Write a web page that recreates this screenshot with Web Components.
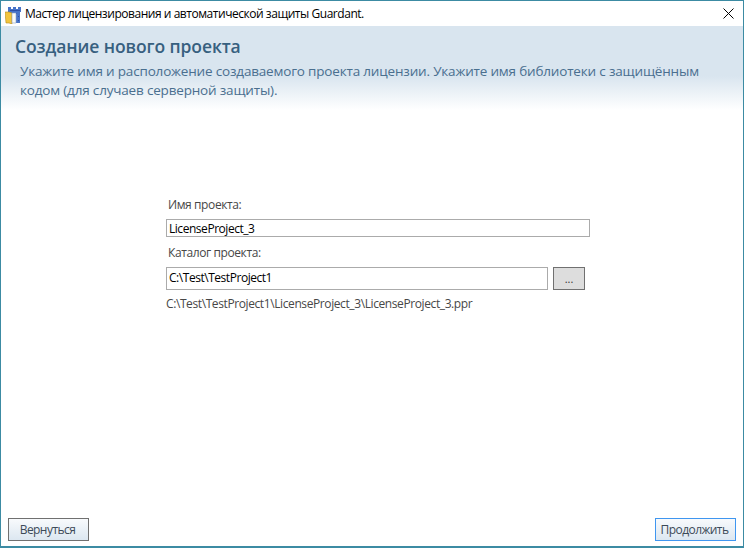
<!DOCTYPE html>
<html lang="ru">
<head>
<meta charset="utf-8">
<title>Guardant</title>
<style>
html, body { margin: 0; padding: 0; height: 100%; background: #fff; }
body { font-family: "Open Sans", "Noto Sans", sans-serif; font-size: 12px; }
</style>
</head>
<body>
<wizard-window>
    <title-bar slot="title" text="Мастер лицензирования и автоматической защиты Guardant."></title-bar>
    <wizard-header slot="header" heading="Создание нового проекта">Укажите имя и расположение создаваемого проекта лицензии. Укажите имя библиотеки с защищённым кодом (для случаев серверной защиты).</wizard-header>
    <project-form slot="body"></project-form>
    <wizard-button slot="back">Вернуться</wizard-button>
    <wizard-button slot="next" focused>Продолжить</wizard-button>
</wizard-window>

<script>
const FONT = '"Open Sans", "Noto Sans", sans-serif';

class WizardWindow extends HTMLElement {
    connectedCallback() {
        this.attachShadow({mode: 'open'}).innerHTML = `
            <style>
                :host { display: flex; flex-direction: column; box-sizing: border-box; width: 744px; height: 548px; border: 1px solid #3c8ba3; border-bottom-width: 2px; background: #fff; overflow: hidden; }
                .body { flex: 1; }
                .footer { display: flex; justify-content: space-between; padding: 0 7px 5px 7px; }
            </style>
            <slot name="title"></slot>
            <slot name="header"></slot>
            <div class="body"><slot name="body"></slot></div>
            <div class="footer"><slot name="back"></slot><slot name="next"></slot></div>
        `;
    }
}

class TitleBar extends HTMLElement {
    connectedCallback() {
        this.attachShadow({mode: 'open'}).innerHTML = `
            <style>
                :host { display: flex; align-items: center; height: 25px; background: #fff; flex: none; }
                svg.icon { margin: 3px 3px 0 4px; flex: none; }
                .text { flex: 1; font: 12px/16px ${FONT}; letter-spacing: -0.46px; color: #000; white-space: nowrap; }
                svg.close { margin-right: 9px; flex: none; }
            </style>
            <svg class="icon" width="17" height="18" viewBox="0 0 17 18">
                <path d="M3 1h3v2h2V1h3v2h2V1h3v5h-1v11H4V6H3z" fill="#4673c8"/>
                <path d="M5 4h10v1H5zM6 8h1v1H6zM10 7h2v1h-2zM13 10h1v1h-1zM13 14h1v1h-1z" fill="#2a4ea6"/>
                <path d="M0 6h4l3 1v11l-3-1H1z" fill="#f2c53d" stroke="#b48a1e" stroke-width=".6"/>
                <path d="M7 7h4v10H7z" fill="#fbfbf6" stroke="#8ea6cc" stroke-width=".6"/>
            </svg>
            <div class="text">${this.getAttribute('text')}</div>
            <svg class="close" width="11" height="11" viewBox="0 0 11 11"><path d="M.5.5l10 10M10.5.5l-10 10" stroke="#000" stroke-width="1" fill="none"/></svg>
        `;
    }
}

class WizardHeader extends HTMLElement {
    connectedCallback() {
        this.attachShadow({mode: 'open'}).innerHTML = `
            <style>
                :host { display: block; height: 84px; box-sizing: border-box; padding: 9px 14px 0 14px; flex: none;
                    background: linear-gradient(to bottom, #d9e5ef 0, #d9e5ef 50px, #ffffff 84px); }
                h1 { margin: 0; font: 600 17.5px/22px ${FONT}; color: #37607f; letter-spacing: -0.1px; }
                p { margin: 5px 0 0 5px; width: 685px; font: 13.5px/19px ${FONT}; letter-spacing: -0.18px; color: #4a6f8f; }
            </style>
            <h1>${this.getAttribute('heading')}</h1>
            <p><slot></slot></p>
        `;
    }
}

class TextField extends HTMLElement {
    connectedCallback() {
        this.attachShadow({mode: 'open'}).innerHTML = `
            <style>
                :host { display: flex; align-items: center; box-sizing: border-box; height: var(--field-height, 18px); border: 1px solid #ababab; padding: var(--field-pad, 1px 2px 0 2px); font: 12px/16px ${FONT}; letter-spacing: -0.46px; color: #000; background: #fff; white-space: nowrap; }
            </style>
            <slot></slot>
        `;
    }
}

class ProjectForm extends HTMLElement {
    connectedCallback() {
        this.attachShadow({mode: 'open'}).innerHTML = `
            <style>
                :host { display: block; box-sizing: border-box; width: 424px; margin: 0 0 0 165px; padding-top: 87px; font: 12px/16px ${FONT}; letter-spacing: -0.4px; color: #474747; }
                .label { padding-left: 2px; height: 16px; }
                .gap2 { margin-top: 8px; }
                .gap3 { margin-top: 6px; }
                .row { display: flex; gap: 5px; }
                .row text-field { --field-height: 23px; --field-pad: 0 2px 2px 2px; flex: none; width: 382px; }
                .path { margin-top: 6px; }
            </style>
            <div class="label">Имя проекта:</div>
            <text-field class="gap3">LicenseProject_3</text-field>
            <div class="label gap2">Каталог проекта:</div>
            <div class="row gap3">
                <text-field>C:\\Test\\TestProject1</text-field>
                <browse-button>...</browse-button>
            </div>
            <div class="path">C:\\Test\\TestProject1\\LicenseProject_3\\LicenseProject_3.ppr</div>
        `;
    }
}

class BrowseButton extends HTMLElement {
    connectedCallback() {
        this.attachShadow({mode: 'open'}).innerHTML = `
            <style>
                :host { display: flex; align-items: center; justify-content: center; box-sizing: border-box; width: 32px; height: 23px; border: 1px solid #707070; background: #dddddd; color: #333; font: 11px/16px ${FONT}; letter-spacing: 0; }
            </style>
            <slot></slot>
        `;
    }
}

class WizardButton extends HTMLElement {
    connectedCallback() {
        let border = this.hasAttribute('focused') ? '#3f96f0' : '#707070';
        this.attachShadow({mode: 'open'}).innerHTML = `
            <style>
                :host { display: flex; align-items: center; justify-content: center; box-sizing: border-box; width: 81px; height: 23px; padding: 1px 2px 0 0; border: 1px solid ${border};
                    background: linear-gradient(to bottom, #f8fafc 0%, #dce7f1 100%); color: #3c4a58; font: 12px/16px ${FONT}; letter-spacing: -0.55px; }
            </style>
            <slot></slot>
        `;
    }
}

customElements.define('wizard-window', WizardWindow);
customElements.define('title-bar',     TitleBar);
customElements.define('wizard-header', WizardHeader);
customElements.define('text-field',    TextField);
customElements.define('project-form',  ProjectForm);
customElements.define('browse-button', BrowseButton);
customElements.define('wizard-button', WizardButton);
</script>
</body>
</html>
